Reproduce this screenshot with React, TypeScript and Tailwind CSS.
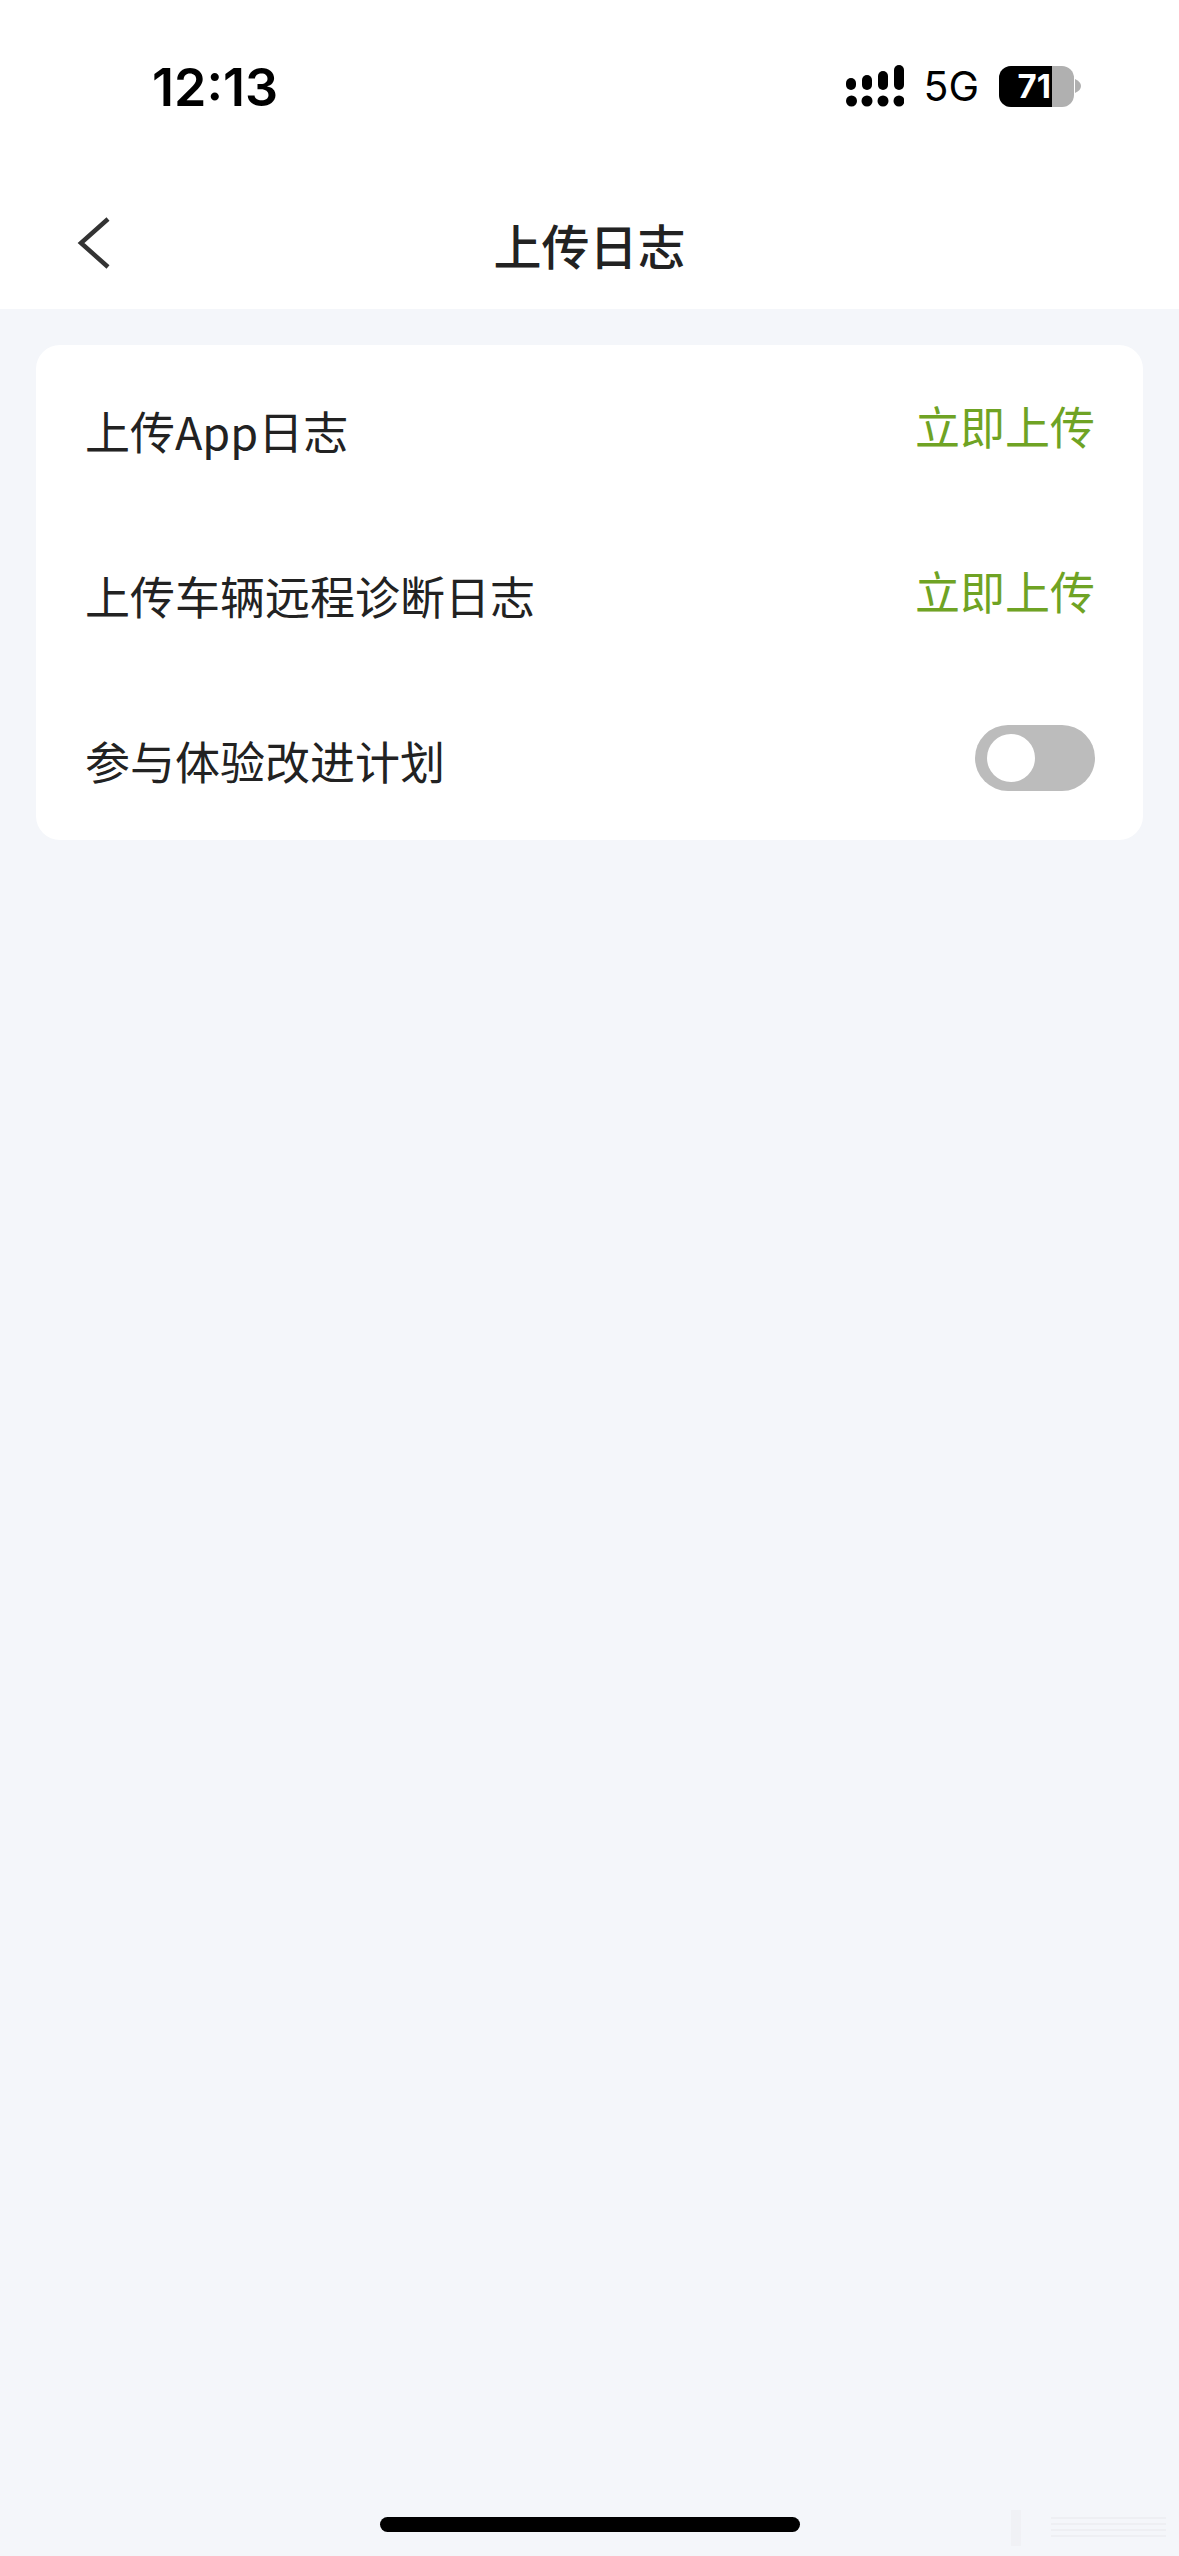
const CJK = `"Noto Sans CJK SC", "Noto Sans", sans-serif`

function SignalIcon() {
  return (
    <svg width="58" height="42" viewBox="0 0 58 42" className="block">
      <rect x="0" y="13" width="10" height="12" rx="5" fill="#000" />
      <rect x="16" y="10" width="10" height="15" rx="5" fill="#000" />
      <rect x="32" y="6" width="10" height="19" rx="5" fill="#000" />
      <rect x="48" y="0" width="10" height="25" rx="5" fill="#000" />
      <circle cx="5.5" cy="36" r="5.5" fill="#000" />
      <circle cx="21" cy="36" r="5.5" fill="#000" />
      <circle cx="37" cy="36" r="5.5" fill="#000" />
      <circle cx="53" cy="36" r="5.5" fill="#000" />
    </svg>
  )
}

function Battery() {
  return (
    <div className="flex items-center">
      <div className="flex h-[41px] w-[75px] overflow-hidden rounded-[12px] bg-[#b0b0b0]">
        <div className="flex h-full w-[53px] items-center justify-end bg-black pr-px">
          <span className="font-['Inter'] text-[33px] leading-none font-bold text-white">71</span>
        </div>
      </div>
      <svg width="6" height="14" viewBox="0 0 6 14" className="ml-px block">
        <path d="M0 0 C4 2 6 4 6 7 C6 10 4 12 0 14 Z" fill="#b0b0b0" />
      </svg>
    </div>
  )
}

function ActionLink() {
  return (
    <button className="mb-[5px] text-[45px] leading-none text-[#6fa324]" style={{ fontFamily: CJK }}>
      立即上传
    </button>
  )
}

function Toggle() {
  return (
    <div className="flex h-[66px] w-[120px] items-center rounded-full bg-[#bcbcbc] pl-3">
      <div className="h-[48px] w-[48px] rounded-full bg-white" />
    </div>
  )
}

function Row({ label, children }: { label: string; children: React.ReactNode }) {
  return (
    <div className="flex h-[165px] items-center justify-between pr-[48px] pl-[49px]">
      <span className="pt-[5px] text-[45px] leading-none text-[#222222]" style={{ fontFamily: CJK }}>
        {label}
      </span>
      {children}
    </div>
  )
}

export default function App() {
  return (
    <div className="relative flex min-h-[2556px] w-[1179px] flex-col bg-[#f4f6fa]">
      {/* Status bar + nav */}
      <div className="bg-white">
        <div className="flex h-[186px] items-start justify-between pt-[62px] pr-[98px] pl-[152px]">
          <span className="font-['Inter'] text-[52px] leading-[52px] font-semibold text-black">12:13</span>
          <div className="flex items-center pt-[3px]">
            <SignalIcon />
            <span className="mr-[20px] ml-[19px] font-['Inter'] text-[41px] leading-none text-black">5G</span>
            <Battery />
          </div>
        </div>
        <div className="relative flex h-[123px] items-center justify-center pb-[7px]">
          <svg width="34" height="52" viewBox="0 0 34 52" className="absolute top-[31px] left-[77px]">
            <path d="M31 2 L4 26 L31 50" fill="none" stroke="#333333" strokeWidth="4.5" />
          </svg>
          <h1 className="text-[48px] leading-none font-medium text-[#222222]" style={{ fontFamily: CJK }}>
            上传日志
          </h1>
        </div>
      </div>

      {/* Settings card */}
      <div className="mx-[36px] mt-[36px] rounded-[24px] bg-white">
        <Row label="上传App日志">
          <ActionLink />
        </Row>
        <Row label="上传车辆远程诊断日志">
          <ActionLink />
        </Row>
        <Row label="参与体验改进计划">
          <Toggle />
        </Row>
      </div>

      {/* Home indicator */}
      <div className="mt-auto flex justify-center pb-[24px]">
        <div className="h-[15px] w-[420px] rounded-full bg-black" />
      </div>

      {/* Faint watermark, bottom right */}
      <svg width="157" height="36" viewBox="0 0 157 36" className="absolute top-[2510px] left-[1011px]">
        <rect x="0" y="0" width="10" height="36" fill="#f0f1f5" />
        <path d="M40 8 H155 M40 14 H155 M40 20 H155 M40 26 H155" stroke="#eeeff3" strokeWidth="2" />
      </svg>
    </div>
  )
}
